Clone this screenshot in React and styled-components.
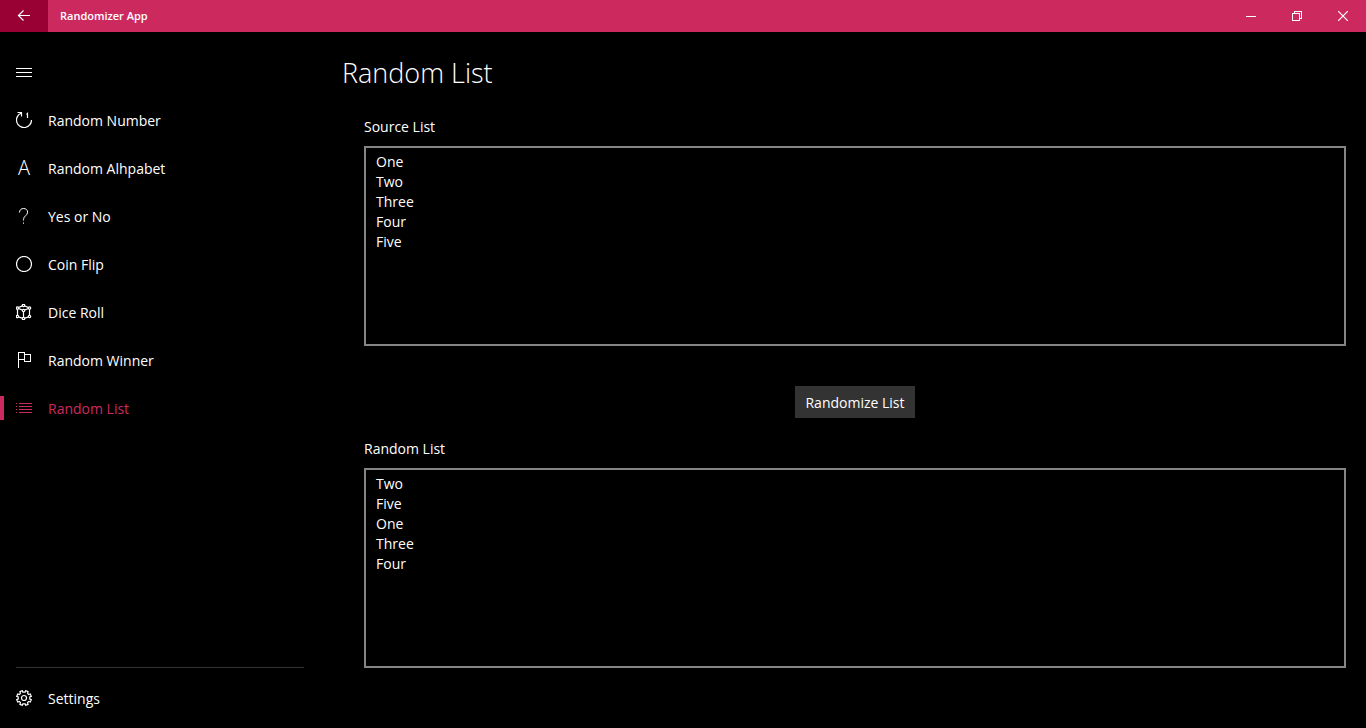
import { useState } from "react";
import styled, { createGlobalStyle, css } from "styled-components";

const GlobalStyle = createGlobalStyle`
  * {
    box-sizing: border-box;
  }
  body {
    margin: 0;
    background-color: #000;
    color: #fff;
    font-family: "Segoe UI", "Open Sans", "Noto Sans", sans-serif;
    font-size: 14px;
    line-height: 20px;
  }
  button,
  textarea {
    font: inherit;
    color: inherit;
  }
`;

const Window = styled.div`
  display: flex;
  flex-direction: column;
  min-height: 100vh;
`;
const TitleBar = styled.header`
  display: flex;
  height: 32px;
  background-color: #cc2a5f;
`;
const BarButton = styled.button`
  display: flex;
  align-items: center;
  justify-content: center;
  width: 46px;
  padding: 0;
  border: none;
  background-color: transparent;
`;
const BackButton = styled(BarButton)`
  width: 48px;
  background-color: #990033;
`;
const AppName = styled.span`
  flex: 1;
  padding-left: 12px;
  font-size: 11px;
  font-weight: 600;
  line-height: 32px;
`;
const Layout = styled.div`
  display: flex;
  flex: 1;
`;
const Sidebar = styled.nav`
  display: flex;
  flex-direction: column;
  width: 320px;
  flex-shrink: 0;
  padding: 16px 0 6px;
`;
const MenuButton = styled.button`
  display: flex;
  align-items: center;
  width: 48px;
  height: 48px;
  padding: 0 16px;
  border: none;
  background-color: transparent;
`;
const NavList = styled.ul`
  flex: 1;
  margin: 0;
  padding: 0;
  list-style: none;
`;
const NavLink = styled.button`
  display: flex;
  align-items: center;
  gap: 16px;
  width: 100%;
  height: 48px;
  padding: 0 16px;
  border: none;
  background-color: transparent;
  text-align: left;
  cursor: pointer;
  ${({ $active }) =>
    $active &&
    css`
      padding-left: 0;
      color: #cc2a5f;
      &::before {
        content: "";
        width: 4px;
        height: 24px;
        margin-right: -4px;
        background-color: #cc2a5f;
      }
    `}
`;
const NavName = styled.span`
  padding-top: 2px;
`;
const Divider = styled.hr`
  width: 288px;
  margin: 0 16px 6px;
  border: none;
  border-top: 1px solid #333;
`;
const Glyph = styled.span`
  width: 16px;
  font-size: 20px;
  font-weight: 300;
  text-align: center;
`;
const Svg = styled.svg`
  display: block;
  flex-shrink: 0;
  fill: none;
  stroke: currentColor;
`;
const Content = styled.main`
  flex: 1;
  padding: 21px 20px 20px 22px;
`;
const Title = styled.h1`
  margin: 0;
  font-size: 27px;
  font-weight: 300;
  line-height: 40px;
`;
const Form = styled.form`
  display: flex;
  flex-direction: column;
  padding: 23px 0 0 22px;
`;
const Label = styled.label`
  padding-top: 1px;
  margin-bottom: 9px;
`;
const TextBox = styled.textarea`
  display: block;
  width: 100%;
  height: 200px;
  padding: 4px 10px;
  border: 2px solid #858585;
  border-radius: 0;
  outline: none;
  background-color: #000;
  resize: none;
`;
const RandomizeButton = styled.button`
  align-self: center;
  height: 32px;
  margin: 40px 0 20px;
  padding: 2px 10px 0;
  border: none;
  background-color: #333;
  cursor: pointer;
`;

const Icon = ({ size = 16, children, ...rest }) => (
  <Svg width={size} height={size} viewBox={`0 0 ${size} ${size}`} aria-hidden="true" {...rest}>
    {children}
  </Svg>
);

const BackIcon = () => (
  <Icon strokeWidth="1.2">
    <path d="M14 7.5H2.5M7.5 2.5l-5 5 5 5" />
  </Icon>
);
const MenuIcon = () => (
  <Icon shapeRendering="crispEdges">
    <path d="M0 4.5h16M0 8.5h16M0 12.5h16" />
  </Icon>
);
const MinimizeIcon = () => (
  <Icon size={10} shapeRendering="crispEdges">
    <path d="M0 5.5h10" />
  </Icon>
);
const RestoreIcon = () => (
  <Icon size={10} shapeRendering="crispEdges">
    <path d="M.5 2.5h7v7h-7zM2.5 2.5v-2h7v7h-2" />
  </Icon>
);
const CloseIcon = () => (
  <Icon size={10} strokeWidth="1.2">
    <path d="M0 0l10 10M10 0L0 10" />
  </Icon>
);
const NumberIcon = () => (
  <Icon strokeWidth="1.2">
    <path d="M15.5 8A7.5 7.5 0 1 1 5 1.2M1.5.5h4v4M10.5 2.5l1-1V6" />
  </Icon>
);
const CoinIcon = () => (
  <Icon>
    <circle cx="8" cy="8" r="7.5" strokeWidth="1.2" />
  </Icon>
);
const QuestionIcon = () => (
  <Icon>
    <path d="M3.5 4.5C3.5 2 5.2.5 7.6.5s4 1.5 4 3.7c0 3.3-4.1 3.8-4.1 7.3v1M7.5 14.5v1.2" />
  </Icon>
);
const diceNodes = [
  [7.5, 1.5],
  [1.5, 4],
  [13.5, 4],
  [7.5, 6.5],
  [1.5, 12.5],
  [13.5, 12.5],
  [7.5, 14.5],
];
const DiceIcon = () => (
  <Icon strokeWidth="1.2">
    <path d="M7.5 1.5l6 2.5v8.5l-6 2-6-2V4zM1.5 4l6 2.5 6-2.5M7.5 6.5v8" />
    {diceNodes.map(([x, y]) => (
      <circle key={`${x}-${y}`} cx={x} cy={y} r="1.2" fill="#000" />
    ))}
  </Icon>
);
const FlagIcon = () => (
  <Icon shapeRendering="crispEdges">
    <path d="M2.5 16V.5h6v7h-6M8.5 2.5h6v7h-6v-2" />
  </Icon>
);
const ListIcon = () => (
  <Icon shapeRendering="crispEdges">
    <path d="M0 3.5h1M0 6.5h1M0 9.5h1M0 12.5h1M3 3.5h13M3 6.5h13M3 9.5h13M3 12.5h13" />
  </Icon>
);
const SettingsIcon = () => (
  <Icon strokeWidth="1.2">
    <circle cx="8" cy="8" r="2.5" />
    <path d="M6.9 2.2 6.3.7 3.9 1.7l.6 1.6-1.2 1.2-1.6-.6-1 2.4 1.5.6v2.2l-1.5.6 1 2.4 1.6-.6 1.2 1.2-.6 1.6 2.4 1 .6-1.5h2.2l.6 1.5 2.4-1-.6-1.6 1.2-1.2 1.6.6 1-2.4-1.5-.6V6.9l1.5-.6-1-2.4-1.6.6-1.2-1.2.6-1.6-2.4-1-.6 1.5z" />
  </Icon>
);

const pages = [
  { name: "Random Number", icon: <NumberIcon /> },
  { name: "Random Alhpabet", icon: <Glyph aria-hidden="true">A</Glyph> },
  { name: "Yes or No", icon: <QuestionIcon /> },
  { name: "Coin Flip", icon: <CoinIcon /> },
  { name: "Dice Roll", icon: <DiceIcon /> },
  { name: "Random Winner", icon: <FlagIcon /> },
  { name: "Random List", icon: <ListIcon /> },
];

const shuffle = (items) => {
  const result = [...items];
  for (let i = result.length - 1; i > 0; i--) {
    const j = Math.floor(Math.random() * (i + 1));
    [result[i], result[j]] = [result[j], result[i]];
  }
  return result;
};

const App = () => {
  const [active, setActive] = useState("Random List");
  const [source, setSource] = useState("One\nTwo\nThree\nFour\nFive");
  const [result, setResult] = useState("Two\nFive\nOne\nThree\nFour");

  const handleSubmit = (e) => {
    e.preventDefault();
    setResult(shuffle(source.split("\n")).join("\n"));
  };

  return (
    <>
      <GlobalStyle />
      <Window>
        <TitleBar>
          <BackButton aria-label="Back">
            <BackIcon />
          </BackButton>
          <AppName>Randomizer App</AppName>
          <BarButton aria-label="Minimize">
            <MinimizeIcon />
          </BarButton>
          <BarButton aria-label="Restore">
            <RestoreIcon />
          </BarButton>
          <BarButton aria-label="Close">
            <CloseIcon />
          </BarButton>
        </TitleBar>
        <Layout>
          <Sidebar>
            <MenuButton aria-label="Menu">
              <MenuIcon />
            </MenuButton>
            <NavList>
              {pages.map(({ name, icon }) => (
                <li key={name}>
                  <NavLink $active={active === name} onClick={() => setActive(name)}>
                    {icon}
                    <NavName>{name}</NavName>
                  </NavLink>
                </li>
              ))}
            </NavList>
            <Divider />
            <NavLink>
              <SettingsIcon />
              <NavName>Settings</NavName>
            </NavLink>
          </Sidebar>
          <Content>
            <Title>Random List</Title>
            <Form onSubmit={handleSubmit}>
              <Label htmlFor="source">Source List</Label>
              <TextBox
                id="source"
                spellCheck={false}
                value={source}
                onChange={(e) => setSource(e.target.value)}
              />
              <RandomizeButton type="submit">Randomize List</RandomizeButton>
              <Label htmlFor="result">Random List</Label>
              <TextBox id="result" spellCheck={false} value={result} readOnly />
            </Form>
          </Content>
        </Layout>
      </Window>
    </>
  );
};
export default App;
